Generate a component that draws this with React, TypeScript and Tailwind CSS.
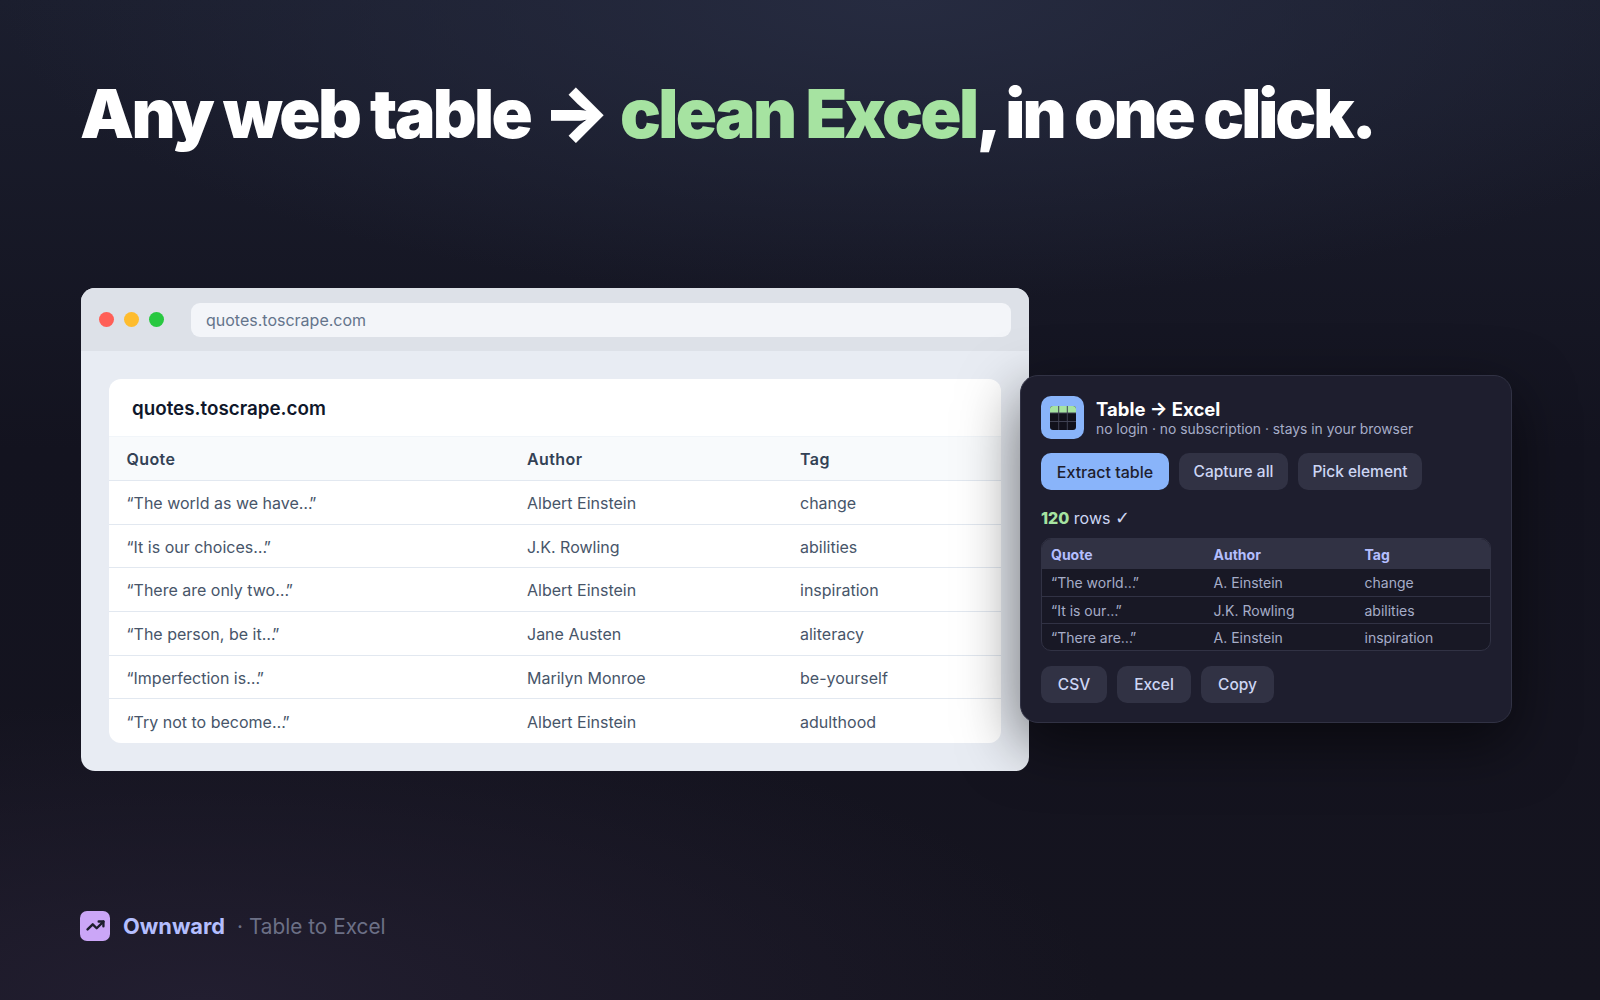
import { TrendingUp } from "lucide-react";

const pageRows = [
  ["The world as we have", "Albert Einstein", "change"],
  ["It is our choices", "J.K. Rowling", "abilities"],
  ["There are only two", "Albert Einstein", "inspiration"],
  ["The person, be it", "Jane Austen", "aliteracy"],
  ["Imperfection is", "Marilyn Monroe", "be-yourself"],
  ["Try not to become", "Albert Einstein", "adulthood"],
];

const panelRows = [
  ["The world", "A. Einstein", "change"],
  ["It is our", "J.K. Rowling", "abilities"],
  ["There are", "A. Einstein", "inspiration"],
];

function Clipped({ text }: { text: string }) {
  return (
    <span>
      “{text}
      <span className="tracking-[-0.15em]">…”</span>
    </span>
  );
}

function TableIcon() {
  return (
    <svg width="26" height="24" viewBox="0 0 26 24">
      <rect width="26" height="24" rx="3" fill="#11111b" />
      <path d="M0 7V3a3 3 0 0 1 3-3h20a3 3 0 0 1 3 3v4z" fill="#a6e3a1" />
      <path d="M8.7 0v24M17.3 0v24M0 7h26M0 15.5h26" stroke="#3f4152" strokeWidth="1" />
    </svg>
  );
}

function BrowserWindow() {
  return (
    <div className="w-[948px] h-[483px] shrink-0 rounded-[14px] overflow-hidden bg-[#e8ecf3] flex flex-col">
      <div className="h-[63px] shrink-0 bg-[#dde1e8] flex items-center pl-[18px] pr-[18px]">
        <div className="flex gap-[10px]">
          <span className="w-[15px] h-[15px] rounded-full bg-[#ff5f57]" />
          <span className="w-[15px] h-[15px] rounded-full bg-[#febc2e]" />
          <span className="w-[15px] h-[15px] rounded-full bg-[#28c840]" />
        </div>
        <div className="ml-[27px] flex-1 h-[34px] rounded-[9px] bg-[#f3f5f9] flex items-center px-[15px] text-[16px] text-[#64748b]">
          quotes.toscrape.com
        </div>
      </div>
      <div className="mt-[28px] mx-[28px] h-[364px] rounded-[12px] overflow-hidden bg-white flex flex-col">
        <div className="h-[58px] shrink-0 flex items-center pl-[23px] pt-[3px] text-[18.8px] font-semibold text-[#0f172a] border-b border-[#f1f5f9]">
          quotes.toscrape.com
        </div>
        <div className="h-[44px] shrink-0 grid grid-cols-[400.5px_273px_1fr] items-center pl-[17.5px] bg-[#f8fafc] border-b border-[#e2e8f0] text-[16px] font-semibold tracking-[0.025em] text-[#334155]">
          <span>Quote</span>
          <span>Author</span>
          <span>Tag</span>
        </div>
        {pageRows.map((row, i) => (
          <div
            key={row[0]}
            className={`h-[43.7px] shrink-0 grid grid-cols-[400.5px_273px_1fr] items-center pl-[17.5px] pt-[1px] text-[16px] text-[#475569] ${
              i < pageRows.length - 1 ? "border-b border-[#e2e8f0]" : ""
            }`}
          >
            <Clipped text={row[0]} />
            <span>{row[1]}</span>
            <span>{row[2]}</span>
          </div>
        ))}
      </div>
    </div>
  );
}

function PanelButton({ label, width }: { label: string; width: string }) {
  return (
    <div className={`${width} h-[37px] rounded-[10px] bg-[#313244] flex items-center justify-center text-[15.5px] font-medium text-[#cdd6f4]`}>
      {label}
    </div>
  );
}

function ExtensionPanel() {
  return (
    <div className="relative -ml-[9px] mt-[87px] w-[492px] h-[348px] shrink-0 rounded-[18px] bg-[#1e1e2e] border border-[#313244] shadow-[0_20px_60px_rgba(0,0,0,0.55)] pt-[20px] px-[20px]">
      <div className="flex items-center gap-[12px]">
        <div className="w-[43px] h-[43px] rounded-[10px] bg-[#89b4fa] flex items-center justify-center">
          <TableIcon />
        </div>
        <div className="flex flex-col -mt-[1px]">
          <span className="text-[18.5px] leading-[24px] font-bold text-white">Table → Excel</span>
          <span className="text-[13.85px] leading-[16px] text-[#a6adc8]">
            no login · no subscription · stays in your browser
          </span>
        </div>
      </div>
      <div className="mt-[14px] flex gap-[10px]">
        <div className="w-[128px] h-[37px] rounded-[10px] bg-[#89b4fa] flex items-center justify-center text-[16px] font-medium text-[#1e1e2e]">
          Extract table
        </div>
        <PanelButton label="Capture all" width="w-[109px]" />
        <PanelButton label="Pick element" width="w-[124px]" />
      </div>
      <div className="mt-[18px] h-[20px] text-[16px] leading-[20px] text-[#cdd6f4]">
        <span className="font-extrabold text-[#a6e3a1]">120</span> rows{" "}
        <span className="font-['DejaVu_Sans',sans-serif] text-[18px]">✓</span>
      </div>
      <div className="mt-[10px] w-[450px] rounded-[10px] overflow-hidden border border-[#313244] bg-[#181825] text-[14px]">
        <div className="h-[30px] grid grid-cols-[162.5px_151px_1fr] items-center pl-[9px] bg-[#313244] font-bold text-[#b4befe]">
          <span>Quote</span>
          <span>Author</span>
          <span>Tag</span>
        </div>
        {panelRows.map((row, i) => (
          <div
            key={row[0]}
            className={`h-[27px] grid grid-cols-[162.5px_151px_1fr] items-center pl-[9px] text-[#a6adc8] ${
              i > 0 ? "border-t border-[#313244]" : ""
            }`}
          >
            <Clipped text={row[0]} />
            <span>{row[1]}</span>
            <span>{row[2]}</span>
          </div>
        ))}
      </div>
      <div className="mt-[15px] flex gap-[10px]">
        <PanelButton label="CSV" width="w-[66px]" />
        <PanelButton label="Excel" width="w-[74px]" />
        <PanelButton label="Copy" width="w-[73px]" />
      </div>
    </div>
  );
}

export default function App() {
  return (
    <div className="w-[1600px] h-[1000px] overflow-hidden flex flex-col pl-[81px] font-['Inter',sans-serif] bg-[radial-gradient(ellipse_900px_300px_at_900px_0px,#262b40_0%,transparent_100%),radial-gradient(ellipse_900px_300px_at_200px_1000px,#221e30_0%,transparent_100%),linear-gradient(180deg,#1b1e2e_0%,#13131f_45%,#15141f_100%)]">
      <h1 className="mt-[70px] -ml-[1px] h-[84px] text-[68px] leading-[84px] font-black tracking-[-0.039em] text-white whitespace-nowrap">
        Any web table <span className="mx-[1px] text-[72px]">→</span>{" "}
        <span className="text-[#a6e3a1]">clean Excel</span>
        <span className="tracking-[-0.045em]">, in one click.</span>
      </h1>
      <div className="mt-[134px] flex items-start">
        <BrowserWindow />
        <ExtensionPanel />
      </div>
      <div className="mt-[138px] -ml-[1px] flex items-center">
        <div className="w-[30px] h-[30px] rounded-[7px] bg-[#cba6f7] flex items-center justify-center">
          <TrendingUp size={19} strokeWidth={3} className="text-[#1e1e2e]" />
        </div>
        <span className="ml-[13px] pt-[1px] text-[21.8px] font-bold text-[#b4befe]">Ownward</span>
        <span className="ml-[12px] pt-[1px] text-[20.8px] text-[#6c7086]">· Table to Excel</span>
      </div>
    </div>
  );
}
